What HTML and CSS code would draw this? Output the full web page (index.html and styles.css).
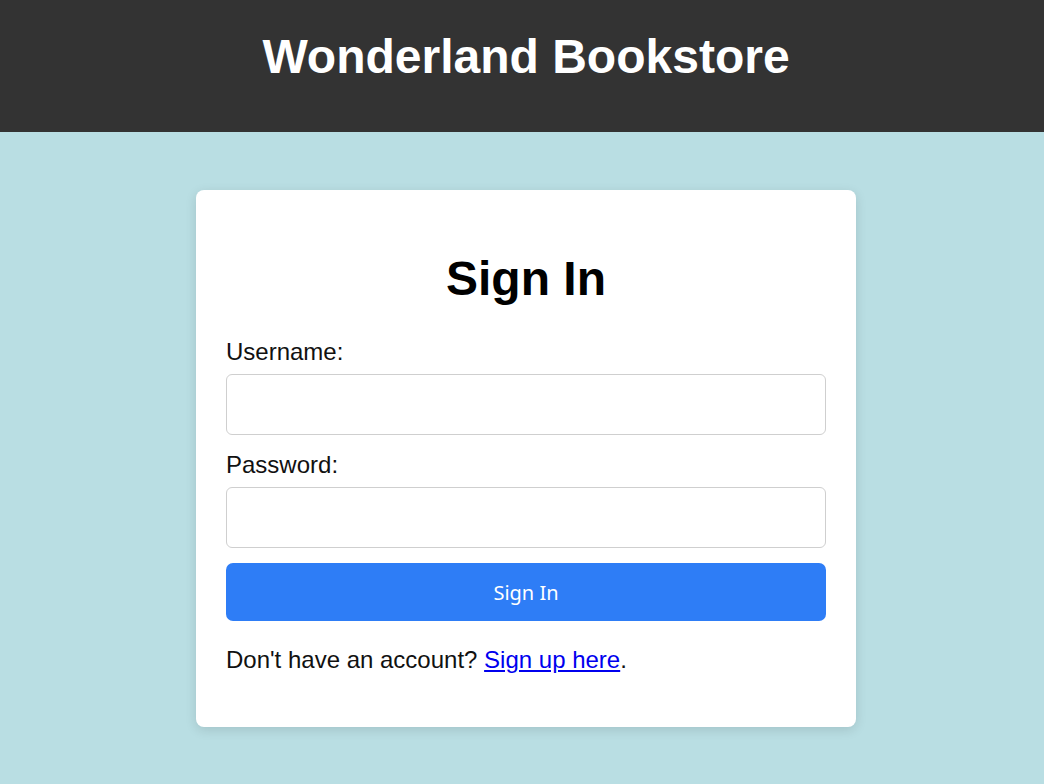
FILE: index.html
```html
<!DOCTYPE html>
<html lang="en">
<head>
<meta charset="utf-8">
<title>Sign In - Wonderland Bookstore</title>
<link rel="stylesheet" href="styles.css">
</head>
<body>
<header class="site-header">
  <h1 class="site-title">Wonderland Bookstore</h1>
</header>
<main class="page">
  <section class="card">
    <h2 class="card-title">Sign In</h2>
    <form class="form">
      <label class="label" for="username">Username:</label>
      <input class="input" type="text" id="username">
      <label class="label label-second" for="password">Password:</label>
      <input class="input" type="password" id="password">
      <button class="btn" type="button">Sign In</button>
    </form>
    <p class="note">Don't have an account? <a class="link" href="#">Sign up here</a>.</p>
  </section>
</main>
</body>
</html>
```

FILE: styles.css
```css
* { box-sizing: border-box; }
html, body { margin: 0; padding: 0; }
body {
  background: #b9dee3;
  font-family: "Liberation Sans", Arial, sans-serif;
  color: #000;
  min-height: 784px;
}
.site-header {
  background: #333333;
  height: 132px;
  padding: 29px 0 0 8px;
}
.site-title {
  margin: 0;
  color: #fff;
  font-size: 48px;
  font-weight: bold;
  text-align: center;
  line-height: 55px;
}
.page {
  display: flex;
  justify-content: center;
  padding: 58px 0 0 8px;
}
.card {
  width: 660px;
  background: #fff;
  border-radius: 8px;
  box-shadow: 0 3px 12px rgba(0, 0, 0, 0.12);
  padding: 61px 30px 53px;
}
.card-title {
  margin: 0 0 32px;
  text-align: center;
  font-size: 48px;
  line-height: 55px;
  font-weight: bold;
}
.form {
  display: flex;
  flex-direction: column;
}
.label {
  font-size: 24px;
  line-height: 28px;
  color: #111;
  margin-bottom: 8px;
}
.label-second { margin-top: 16px; }
.input {
  height: 61px;
  border: 1.5px solid #cfcfcf;
  border-radius: 6px;
  font-size: 24px;
  padding: 0 15px;
  background: #fff;
}
.btn {
  margin-top: 15px;
  height: 58px;
  border: none;
  border-radius: 7px;
  background: #2e7df6;
  color: #fff;
  font-family: "Noto Sans", "Open Sans", sans-serif;
  font-size: 20px;
}
.note {
  margin: 25px 0 0;
  font-size: 24px;
  line-height: 28px;
  color: #111;
}
.link {
  color: #0000ee;
  text-decoration: underline;
}
```
